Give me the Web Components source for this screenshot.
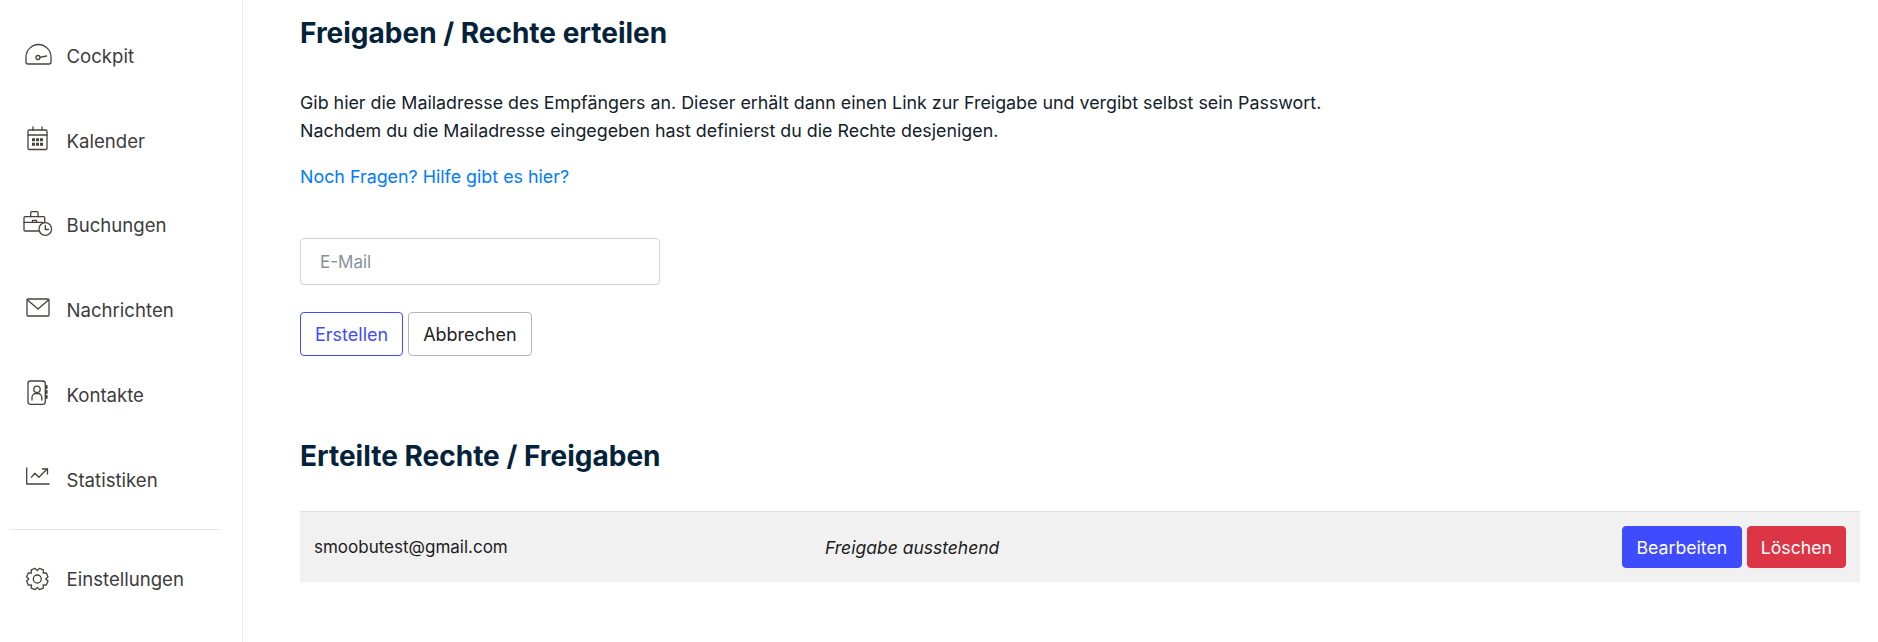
<!DOCTYPE html>
<html lang="de">
<head>
<meta charset="utf-8">
<title>Freigaben</title>
<style>
  html, body { margin: 0; height: 100%; background: #fff; }
  body { font-family: "Inter", "Liberation Sans", sans-serif; font-size: 17px; }
</style>
</head>
<body>
<app-shell>
  <side-nav slot="nav">
    <nav-item icon="cockpit">Cockpit</nav-item>
    <nav-item icon="calendar">Kalender</nav-item>
    <nav-item icon="bookings">Buchungen</nav-item>
    <nav-item icon="mail">Nachrichten</nav-item>
    <nav-item icon="contacts">Kontakte</nav-item>
    <nav-item icon="stats">Statistiken</nav-item>
    <nav-item icon="gear" class="after-rule">Einstellungen</nav-item>
  </side-nav>
  <share-page></share-page>
</app-shell>

<script>
// eight rounded teeth, the stroke join does the rounding
function gearPath(cx, cy) {
  let d = "";
  for (let i = 0; i < 8; i++) {
    const a = (i * Math.PI) / 4 + Math.PI / 8;
    const pts = [[8.4, -0.38], [10.9, -0.2], [10.9, 0.2], [8.4, 0.38]];
    for (const [r, o] of pts) {
      const x = cx + r * Math.cos(a + o);
      const y = cy + r * Math.sin(a + o);
      d += (d ? "L" : "M") + x.toFixed(2) + " " + y.toFixed(2);
    }
  }
  return d + "Z";
}

const ICONS = {
  cockpit: `<path d="M10 29h21a2 2 0 0 0 2-2v-5C33 15 27 9.500 20.500 9.500S8 15 8 22v5a2 2 0 0 0 2 2z"/><circle cx="20" cy="22.500" r="2"/><path d="M22 22.300l6.500-1.300"/>`,
  calendar: `<rect x="10" y="10" width="19" height="19.500" rx="1.200"/><path d="M10 15h19M15 7v3M24 7v3"/><path stroke="none" fill="#46413e" d="M14 18.300h3v3h-3zM18 18.300h3v3h-3zM22 18.300h3v3h-3zM14 22.800h3v3h-3zM18 22.800h3v3h-3zM22 22.800h3v3h-3z"/>`,
  bookings: `<path d="M20.500 26H7a1 1 0 0 1-1-1V12.700a1 1 0 0 1 1-1h18.700a1 1 0 0 1 1 1v4.500"/><path d="M12.700 11.700V7.700a1 1 0 0 1 1-1H19a1 1 0 0 1 1 1v4M6 17.300h19M14.500 17.300v-2h4v2"/><circle cx="27.300" cy="24" r="6.300"/><path d="M27.300 20.500v4h3.200"/>`,
  mail: `<rect x="9" y="9" width="22" height="17" rx="1"/><path d="M9.500 10l10.500 9 10.500-9"/>`,
  contacts: `<rect x="10" y="6" width="17.300" height="23.300" rx="2.500"/><circle cx="19" cy="14.300" r="3.200"/><path d="M14 25v-2.500a4 4 0 0 1 4-4h1.800a4 4 0 0 1 4 4V25"/><path stroke-width="2" d="M28.600 10.800v2.200M28.600 15.800V18M28.600 20.800V23"/>`,
  stats: `<path d="M8.700 9v16H31"/><path d="M13.300 18.300l3.400-4 4.300 4 4-4.300 4.300-4"/><path d="M24.500 10h5v5"/>`,
  gear: `<path d="${gearPath(19.3, 20)}"/><circle cx="19.3" cy="20" r="4"/>`
};

class AppShell extends HTMLElement {
  constructor() {
    super();
    this.root = this.attachShadow({ mode: "open" });
    this.root.innerHTML = `
      <style>
        :host { display: grid; grid-template-columns: 243px 1fr; height: 642px; overflow: hidden; }
      </style>
      <slot name="nav"></slot>
      <slot></slot>
    `;
  }
}

class SideNav extends HTMLElement {
  constructor() {
    super();
    this.root = this.attachShadow({ mode: "open" });
    this.root.innerHTML = `
      <style>
        :host {
          display: block;
          box-sizing: border-box;
          height: 642px;
          padding: 13px 21px 0 10px;
          border-right: 1px solid #eaeaea;
        }
      </style>
      <slot></slot>
    `;
  }
}

class NavItem extends HTMLElement {
  constructor() {
    super();
    this.root = this.attachShadow({ mode: "open" });
    this.root.innerHTML = `
      <style>
        :host {
          display: flex;
          align-items: center;
          gap: 8.500px;
          height: 84.800px;
          padding-left: 8px;
          color: #3c3c3c;
          font-size: 18.600px;
        }
        :host(.after-rule) {
          margin-top: 7px;
          height: 98px;
          border-top: 1px solid #e8e8e8;
        }
        .label { padding-top: 1px; }
        svg {
          width: 40px;
          height: 40px;
          flex: none;
          fill: none;
          stroke: #46413e;
          stroke-width: 1.300;
          stroke-linecap: round;
          stroke-linejoin: round;
        }
      </style>
      <svg viewBox="0 0 40 40"></svg>
      <span class="label"><slot></slot></span>
    `;
    this.root.querySelector("svg").innerHTML = ICONS[this.getAttribute("icon")] || "";
  }
}

class UiButton extends HTMLElement {
  constructor() {
    super();
    this.root = this.attachShadow({ mode: "open" });
    this.root.innerHTML = `
      <style>
        :host {
          display: inline-flex;
          align-items: center;
          justify-content: center;
          box-sizing: border-box;
          height: 44px;
          padding: 0 14px;
          border: 1px solid #b5b5b5;
          border-radius: 4px;
          background: #fff;
          color: #222;
          font-size: 18px;
          cursor: pointer;
        }
        :host([kind="outline"]) { border-color: #3f4bff; color: #3f4bff; }
        :host([kind="primary"]) { height: 42px; padding: 0 13.500px; font-size: 17.700px; border-color: #3f4bff; background: #3f4bff; color: #fff; }
        :host([kind="danger"]) { height: 42px; padding: 0 13px; font-size: 17.700px; border-color: #dc3545; background: #dc3545; color: #fff; }
      </style>
      <slot></slot>
    `;
  }
}

class ShareRow extends HTMLElement {
  constructor() {
    super();
    this.root = this.attachShadow({ mode: "open" });
    this.root.innerHTML = `
      <style>
        :host {
          display: grid;
          grid-template-columns: 511px 1fr auto;
          align-items: center;
          box-sizing: border-box;
          height: 71px;
          padding: 0 14px;
          background: #f1f1f1;
          border-top: 1px solid #e2e2e2;
          color: #1d1d1d;
          font-size: 17px;
        }
        .status { font-style: italic; font-size: 17.500px; }
        .actions { display: flex; gap: 5px; }
      </style>
      <span><slot name="mail"></slot></span>
      <span class="status"><slot name="status"></slot></span>
      <span class="actions"><slot name="actions"></slot></span>
    `;
  }
}

class SharePage extends HTMLElement {
  constructor() {
    super();
    this.root = this.attachShadow({ mode: "open" });
    this.root.innerHTML = `
      <style>
        :host { display: block; padding: 0 18px 0 57px; color: #14212b; }
        h2 { margin: 0; color: #04233a; font-size: 28px; font-weight: 700; line-height: 34px; }
        .first { padding-top: 16px; }
        p { margin: 0; font-size: 17.850px; line-height: 28px; color: #14212b; }
        .intro { margin-top: 39px; }
        a { display: block; margin-top: 18px; font-size: 17.850px; line-height: 28px; color: #007bff; text-decoration: none; }
        input {
          display: block;
          box-sizing: border-box;
          width: 360px;
          height: 47px;
          margin-top: 47px;
          padding: 0 19px;
          border: 1px solid #ced4da;
          border-radius: 4px;
          font: inherit;
          font-size: 17px;
          outline: none;
        }
        input::placeholder { color: #84919a; opacity: 1; }
        .buttons { display: flex; gap: 5px; margin-top: 27px; }
        .second { margin-top: 83px; }
        share-row { margin-top: 38px; }
      </style>
      <h2 class="first">Freigaben / Rechte erteilen</h2>
      <p class="intro">Gib hier die Mailadresse des Empfängers an. Dieser erhält dann einen Link zur Freigabe und vergibt selbst sein Passwort.<br>Nachdem du die Mailadresse eingegeben hast definierst du die Rechte desjenigen.</p>
      <a href="#">Noch Fragen? Hilfe gibt es hier?</a>
      <input type="email" placeholder="E-Mail">
      <div class="buttons">
        <ui-button kind="outline">Erstellen</ui-button>
        <ui-button>Abbrechen</ui-button>
      </div>
      <h2 class="second">Erteilte Rechte / Freigaben</h2>
      <share-row>
        <span slot="mail">smoobutest@gmail.com</span>
        <span slot="status">Freigabe ausstehend</span>
        <ui-button slot="actions" kind="primary">Bearbeiten</ui-button>
        <ui-button slot="actions" kind="danger">Löschen</ui-button>
      </share-row>
    `;
  }
}

customElements.define("app-shell", AppShell);
customElements.define("side-nav", SideNav);
customElements.define("nav-item", NavItem);
customElements.define("ui-button", UiButton);
customElements.define("share-row", ShareRow);
customElements.define("share-page", SharePage);
</script>
</body>
</html>
